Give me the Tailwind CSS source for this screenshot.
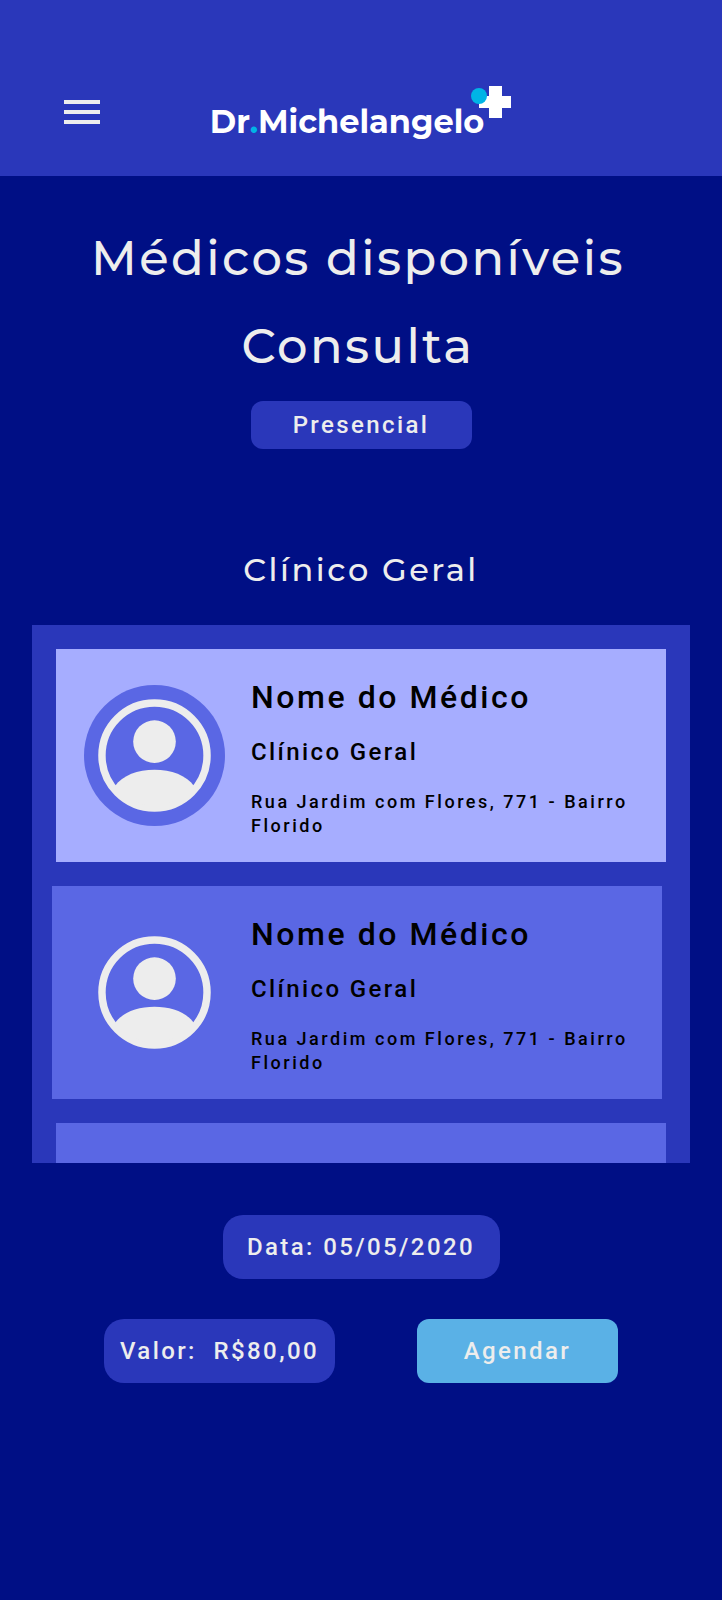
<!DOCTYPE html>
<html lang="pt-BR">
<head>
<meta charset="utf-8">
<meta name="viewport" content="width=device-width, initial-scale=1">
<title>Dr.Michelangelo</title>
<script src="https://cdn.jsdelivr.net/npm/@tailwindcss/browser@4"></script>
</head>
<body class="min-h-screen bg-[#000f85] font-['Roboto',sans-serif] font-medium text-[#ededed]">
  <svg class="hidden" aria-hidden="true">
    <symbol id="person" viewBox="0 0 114 114">
      <circle cx="57" cy="57" r="53" fill="none" stroke="#ededed" stroke-width="7.500"/>
      <circle cx="57" cy="43" r="21.500" fill="#ededed"/>
      <path d="M17 88C25 77 40 71.500 57 71.500S89 77 97 88A51 51 0 0 1 17 88Z" fill="#ededed"/>
    </symbol>
  </svg>

  <header class="relative flex h-44 items-end justify-center bg-[#2a37ba] pb-[34px]">
    <button type="button" aria-label="Menu" class="absolute top-22 left-[58px] size-12">
      <svg viewBox="0 0 24 24" fill="#ededed" class="size-12"><path d="M3 18h18v-2H3v2zm0-5h18v-2H3v2zm0-7v2h18V6H3z"/></svg>
    </button>
    <a href="#" class="relative mr-7 text-[32px] leading-10 font-bold text-white font-['Montserrat','Inter',sans-serif]">Dr<span class="text-[#00b4e6]">.</span>Michelangelo<svg viewBox="0 0 40 32" class="absolute -top-4 left-full -ml-[13px] h-8 w-10" aria-hidden="true">
        <path d="M18 0h13v10h9v12h-9v10H18V22H8V10h10z" fill="#fff"/>
        <circle cx="8" cy="10" r="8" fill="#00b4e6"/>
      </svg></a>
  </header>

  <main class="px-8 pt-[38px]">
    <h1 class="pr-1.5 text-center text-[48px] leading-[88px] font-medium tracking-wider font-['Montserrat','Inter',sans-serif]">Médicos disponíveis<br>Consulta</h1>
    <p class="mx-auto mt-[11px] h-12 w-[221px] rounded-xl bg-[#2a37ba] text-center text-2xl leading-12 tracking-widest">Presencial</p>

    <h2 class="mt-[101px] text-center text-[32px] leading-10 font-medium tracking-[0.08em] font-['Montserrat','Inter',sans-serif]">Clínico Geral</h2>

    <ul class="mt-[35px] flex flex-col gap-6 bg-[#2a37ba] px-6 pt-6 text-black">
      <li>
        <button type="button" aria-pressed="true" class="flex h-[213px] w-full items-center gap-[26px] bg-[#a6adff] px-7 text-left">
          <span class="flex size-[141px] shrink-0 items-center justify-center rounded-full bg-[#5a67e4]"><svg class="size-[113px]" aria-hidden="true"><use href="#person"/></svg></span>
          <span class="flex flex-col pt-[3px]">
            <span class="text-[32px] leading-10 tracking-[0.08em]">Nome do Médico</span>
            <span class="mt-[19px] text-2xl leading-8 tracking-widest">Clínico Geral</span>
            <span class="mt-[22px] text-lg leading-6 tracking-[0.14em]">Rua Jardim com Flores, 771 - Bairro Florido</span>
          </span>
        </button>
      </li>
      <li class="-ml-1 mr-1">
        <button type="button" aria-pressed="false" class="flex h-[213px] w-full items-center gap-[26px] bg-[#5a67e4] pr-6 pl-8 text-left">
          <span class="flex size-[141px] shrink-0 items-center justify-center rounded-full"><svg class="size-[113px]" aria-hidden="true"><use href="#person"/></svg></span>
          <span class="flex flex-col pt-[3px]">
            <span class="text-[32px] leading-10 tracking-[0.08em]">Nome do Médico</span>
            <span class="mt-[19px] text-2xl leading-8 tracking-widest">Clínico Geral</span>
            <span class="mt-[22px] text-lg leading-6 tracking-[0.14em]">Rua Jardim com Flores, 771 - Bairro Florido</span>
          </span>
        </button>
      </li>
      <li class="h-10 bg-[#5a67e4]"></li>
    </ul>

    <p class="mx-auto mt-[52px] h-16 w-[277px] rounded-[20px] bg-[#2a37ba] text-center text-2xl leading-16 tracking-widest">Data: 05/05/2020</p>
    <div class="mt-10 flex justify-between px-[72px] text-center text-2xl leading-16 tracking-widest">
      <p class="h-16 w-[231px] rounded-[20px] bg-[#2a37ba]">Valor:&nbsp; R$80,00</p>
      <button type="button" class="h-16 w-[201px] rounded-xl bg-[#5ab1e6] tracking-widest">Agendar</button>
    </div>
  </main>
</body>
</html>
